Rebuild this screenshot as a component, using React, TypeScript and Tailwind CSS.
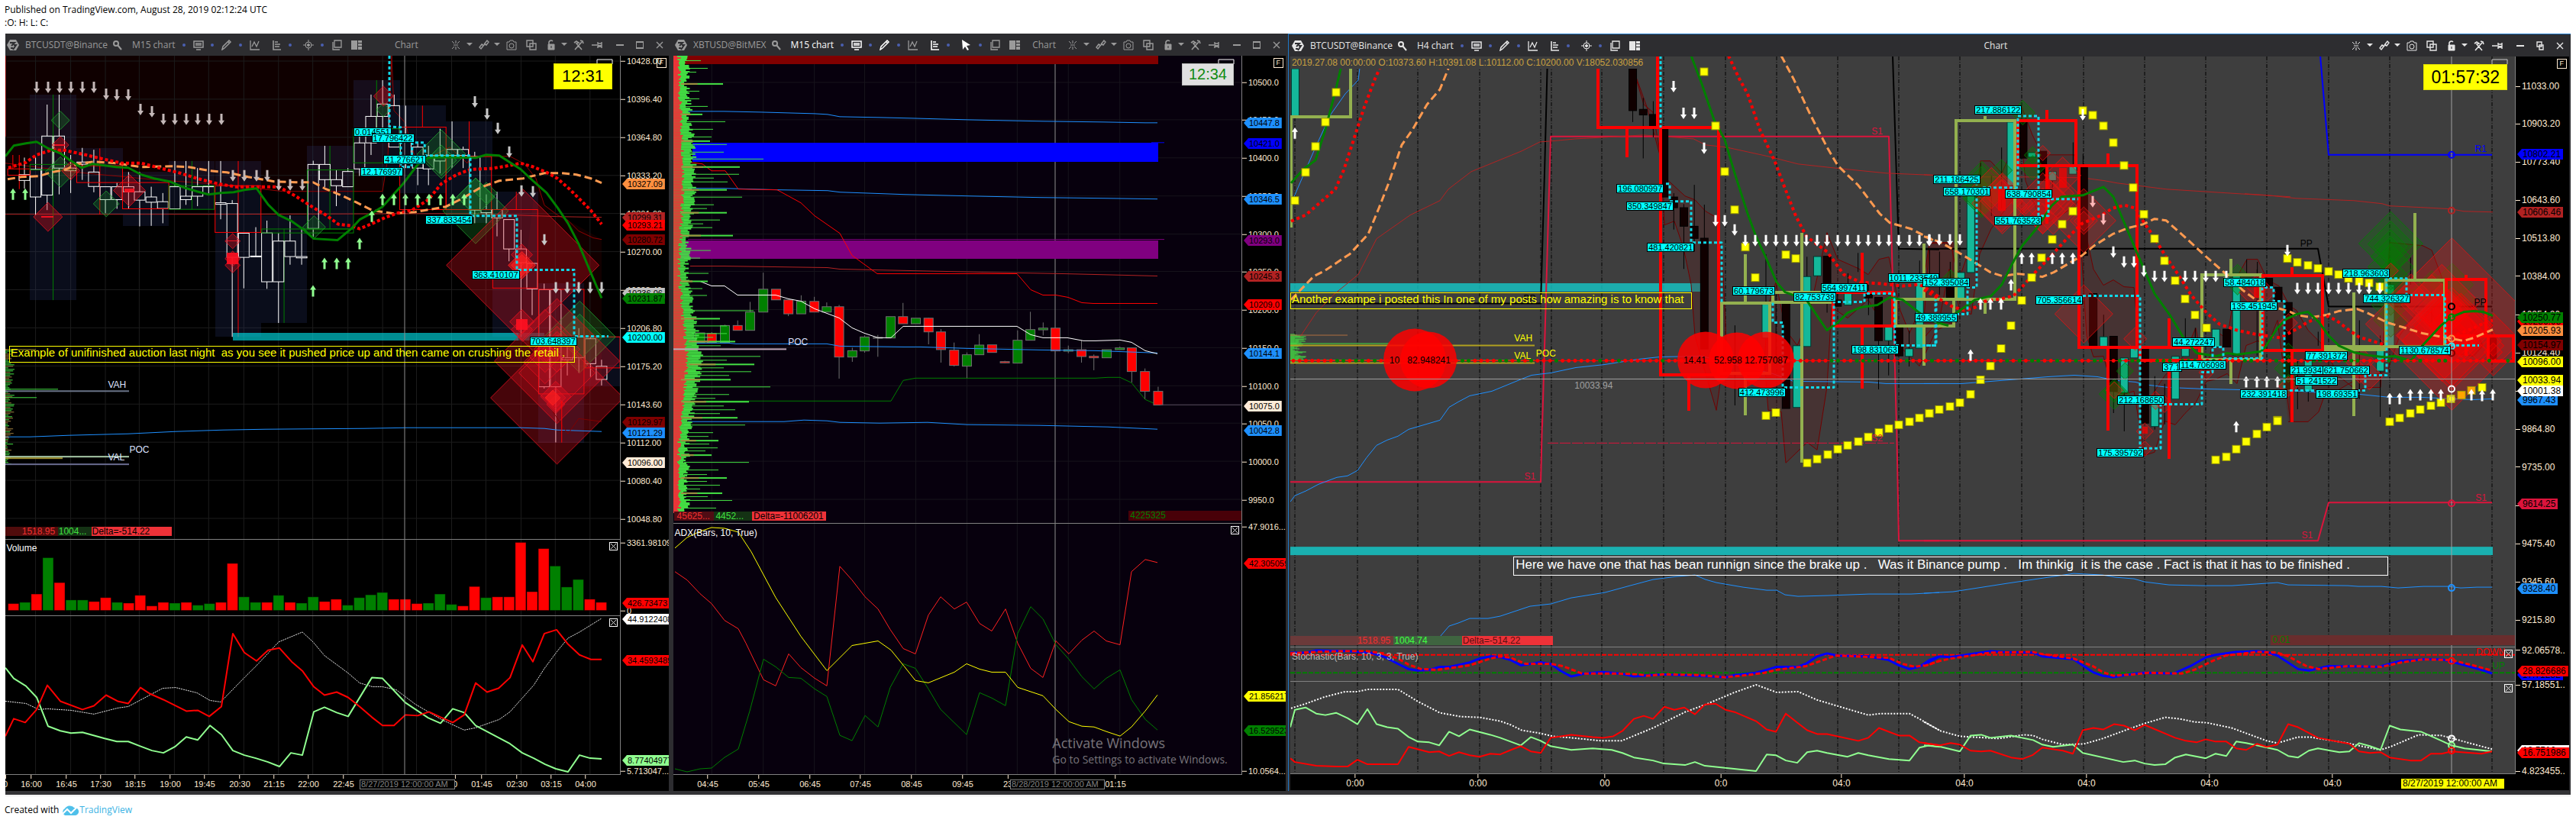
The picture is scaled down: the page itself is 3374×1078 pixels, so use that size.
import React from 'react';
import clsx from 'clsx';

type Zone = [ox: number, oy: number, kx: number, ky: number];
type View = [x: number, y: number, w: number, h: number];
type Mark = { z: Zone; x: number; y: number; t: string; c?: string };
type Tick = { y: number; t: string };
type Flag = { y: number; t: string; c: string };

// Each zone maps its own recording units to workspace pixels.
const A: Zone = [0, 0, 0.5612, 0.3444];
const B: Zone = [0, 540, 0.5612, 0.3431];
const C: Zone = [870, 40, 0.523, 0.3333];
const D: Zone = [870, 550, 0.523, 0.3333];
const E: Zone = [1680, 40, 0.5485, 0.3333];
const F: Zone = [2520, 40, 0.5446, 0.3333];
const G: Zone = [1680, 550, 0.5485, 0.3333];
const H: Zone = [2520, 550, 0.5446, 0.3333];
const J: Zone = [2520, 120, 0.3333, 0.3333];
const K: Zone = [2940, 240, 0.3333, 0.3333];

const px = (z: Zone, x: number, y: number) => [z[0] + x * z[2], z[1] + y * z[3]];
const parse = (s: string) => s.trim().split(/\s+/).map((p) => p.split(',').map(Number));
const points = (z: Zone, s: string) => parse(s).map(([x, y]) => px(z, x, y).map(Math.round).join(',')).join(' ');

const CYAN = 'border border-black bg-[#00ffff] text-black text-[11px] leading-[10px] px-px';

interface LineProps {
  z: Zone;
  p: string;
  c: string;
  w?: number;
  dash?: string;
  fill?: string;
  o?: number;
}

const Line: React.FC<LineProps> = ({ z, p, c, w = 1, dash, fill = 'none', o = 1 }) => (
  <polyline points={points(z, p)} stroke={c} strokeWidth={w} strokeDasharray={dash} fill={fill} opacity={o} strokeLinejoin="round" />
);

// "x1,y1 x2,y2" pairs, one box for every two points
const Boxes: React.FC<LineProps> = ({ z, p, c, w = 1, fill = 'none', o = 1 }) => {
  const list = parse(p);
  return (
    <g stroke={c} strokeWidth={w} fill={fill} opacity={o} shapeRendering="crispEdges">
      {list.filter((_, i) => i % 2 === 0).map(([x, y], i) => {
        const [x1, y1] = px(z, x, y);
        const [x2, y2] = px(z, list[i * 2 + 1][0], list[i * 2 + 1][1]);
        return <rect key={i} x={x1} y={y1} width={x2 - x1} height={y2 - y1} />;
      })}
    </g>
  );
};

// "x,y1,y2" vertical segments
const Wicks: React.FC<LineProps> = ({ z, p, c, w = 1, o = 1 }) => (
  <g stroke={c} strokeWidth={w} opacity={o} shapeRendering="crispEdges">
    {parse(p).map(([x, a, b], i) => {
      const [X, Y] = px(z, x, a);
      return <line key={i} x1={X} x2={X} y1={Y} y2={px(z, x, b)[1]} />;
    })}
  </g>
);

const Squares: React.FC<{ z: Zone; p: string; c?: string }> = ({ z, p, c = '#ffff00' }) => (
  <g fill={c} stroke="#a0a000" strokeWidth={1}>
    {parse(p).map(([x, y], i) => {
      const [X, Y] = px(z, x, y);
      return <rect key={i} x={Math.round(X) - 5} y={Math.round(Y) - 5} width={10} height={10} />;
    })}
  </g>
);

const Arrows: React.FC<{ z: Zone; p: string; c: string; up?: boolean }> = ({ z, p, c, up }) => (
  <g fill={c}>
    {parse(p).map(([x, y], i) => {
      const [X, Y] = px(z, x, y).map(Math.round);
      const s = up ? -1 : 1;
      return (
        <polygon
          key={i}
          points={`${X - 1.5},${Y - 7 * s} ${X + 1.5},${Y - 7 * s} ${X + 1.5},${Y + 2 * s} ${X + 4},${Y + 2 * s} ${X},${Y + 8 * s} ${X - 4},${Y + 2 * s} ${X - 1.5},${Y + 2 * s}`}
        />
      );
    })}
  </g>
);

// "x,y,r" diamonds, radius in pixels
const Gems: React.FC<{ z: Zone; p: string; c: string; o?: number }> = ({ z, p, c, o = 0.3 }) => (
  <g stroke={c} fill={c} fillOpacity={o} strokeOpacity={0.8}>
    {parse(p).map(([x, y, r], i) => {
      const [X, Y] = px(z, x, y);
      return <polygon key={i} points={`${X},${Y - r} ${X + r},${Y} ${X},${Y + r} ${X - r},${Y}`} />;
    })}
  </g>
);

// "x,top,bottom,high,low" candles
const Candles: React.FC<{ z: Zone; p: string; body: string; edge: string; w: number }> = ({ z, p, body, edge, w }) => (
  <g stroke={edge} fill={body} shapeRendering="crispEdges">
    {parse(p).map(([x, t, b, h, l], i) => {
      const [X, T] = px(z, x, t);
      const yb = px(z, x, b)[1];
      return (
        <g key={i}>
          <line x1={X} x2={X} y1={px(z, x, h ?? t)[1]} y2={T} />
          <line x1={X} x2={X} y1={yb} y2={px(z, x, l ?? b)[1]} />
          <rect x={X - w / 2} y={T} width={w} height={Math.max(1, yb - T)} />
        </g>
      );
    })}
  </g>
);

const Rings: React.FC<{ list: [number, number, string][] }> = ({ list }) => (
  <g fill="none" strokeWidth={2}>
    {list.map(([x, y, c], i) => <circle key={i} cx={x} cy={y} r={4} stroke={c} />)}
  </g>
);

const noise = (i: number) => {
  const v = Math.sin(i * 12.9898) * 43758.5453;
  return v - Math.floor(v);
};

interface PaneProps {
  view: View;
  height: string;
  bg: string;
  axis: string;
  ticks?: Tick[];
  flags?: Flag[];
  marks?: Mark[];
  closable?: boolean;
  children: React.ReactNode;
  over?: React.ReactNode;
  axisTop?: React.ReactNode;
}

const Pane: React.FC<PaneProps> = ({ view, height, bg, axis, ticks = [], flags = [], marks = [], closable, children, over, axisTop }) => {
  const top = (y: number) => `${((y - view[1]) / view[3]) * 100}%`;
  return (
    <div className={clsx('flex bg-black', height)}>
      <div className={clsx('relative flex-1 overflow-hidden border-b border-[#808080]', bg)}>
        <svg className="absolute inset-0 h-full w-full" viewBox={view.join(' ')} preserveAspectRatio="none">
          {children}
        </svg>
        {marks.map((m, i) => {
          const [x, y] = px(m.z, m.x, m.y);
          return (
            <span
              key={i}
              className={clsx('absolute whitespace-pre', m.c ?? CYAN)}
              style={{ left: `${((x - view[0]) / view[2]) * 100}%`, top: top(y) }}
            >
              {m.t}
            </span>
          );
        })}
        {closable && (
          <button aria-label="Close pane" className="absolute right-[3px] top-[3px] h-[11px] w-[11px] border border-white">
            <svg viewBox="0 0 9 9" className="h-full w-full"><path d="M1 1l7 7M8 1L1 8" stroke="#ddd" /></svg>
          </button>
        )}
        {over}
      </div>
      <div className={clsx('relative overflow-x-clip border-l border-[#808080]', axis)}>
        {ticks.map((t) => (
          <div key={t.t} className="absolute left-0 flex -translate-y-1/2 items-center whitespace-nowrap text-[#ffebd2]" style={{ top: top(t.y) }}>
            <span className="mr-[2px] h-px w-[6px] bg-[#ffebd2]" />
            {t.t}
          </div>
        ))}
        {flags.map((f) => (
          <div
            key={f.t}
            className={clsx(
              'absolute left-[2px] h-[14px] -translate-y-1/2 whitespace-nowrap pl-[7px] pr-[3px] leading-[14px] text-black [clip-path:polygon(6px_0,100%_0,100%_100%,6px_100%,0_50%)]',
              f.c
            )}
            style={{ top: top(f.y) }}
          >
            {f.t}
          </div>
        ))}
        {axisTop}
      </div>
    </div>
  );
};

interface TimeAxisProps {
  view: [number, number];
  labels: [number, string][];
  stamp: [number, string];
  stampClass: string;
}

const TimeAxis: React.FC<TimeAxisProps> = ({ view, labels, stamp, stampClass }) => {
  const left = (x: number) => `${((x - view[0]) / view[1]) * 100}%`;
  return (
    <div className="relative h-[21px] overflow-hidden bg-black text-[#ffebd2]">
      {labels.map(([x, t]) => (
        <div key={x} className="absolute top-0 flex -translate-x-1/2 flex-col items-center" style={{ left: left(x) }}>
          <span className="h-[5px] w-px bg-[#ffebd2]" />
          <span className="h-[14px] whitespace-nowrap leading-[14px]">{t}</span>
        </div>
      ))}
      <div className={clsx('absolute top-[6px] whitespace-nowrap border px-px leading-[11px]', stampClass)} style={{ left: left(stamp[0]) }}>
        {stamp[1]}
      </div>
    </div>
  );
};

const Icon: React.FC<{ label: string; className?: string; w?: number; children: React.ReactNode }> = ({ label, className, w = 14, children }) => (
  <button aria-label={label} className={clsx('shrink-0', className)}>
    <svg width={w} height={14} viewBox={`0 0 ${w} 14`} fill="none" stroke="currentColor">{children}</svg>
  </button>
);

const Dot: React.FC = () => <span className="ml-[9px] mr-[10px] h-1 w-1 shrink-0 rounded-full bg-[#4a5fb0]" />;

const Caret: React.FC<{ className: string }> = ({ className }) => (
  <Icon label="Menu" w={8} className={className}><path d="M0 4h8l-4 4z" fill="currentColor" stroke="none" /></Icon>
);

interface TitleBarProps {
  symbol: string;
  period: string;
  tone: string;
  periodTone: string;
  cursor?: boolean;
  restored?: boolean;
}

const TitleBar: React.FC<TitleBarProps> = ({ symbol, period, tone, periodTone, cursor, restored }) => (
  <div className={clsx('flex h-[29px] items-center justify-between bg-[#2d2d30] pl-[2px] pr-[7px] font-["Open_Sans",sans-serif] text-[12px]', tone)}>
    <div className="flex items-center">
      <svg width={16} height={16} viewBox="0 0 16 16">
        <path d="M4 1h8l4 7-4 7H4L0 8z" fill="currentColor" />
        <path d="M4 5h6L6 9M9 8h3l-4 6M5 12h3" stroke="#2d2d30" strokeWidth={2} fill="none" />
      </svg>
      <span className="ml-2">{symbol}</span>
      <Icon label="Search" className="ml-[6px]"><circle cx={5} cy={5} r={3} strokeWidth={2} /><path d="M7 7l5 6" strokeWidth={2} /></Icon>
      <button className={clsx('ml-3', periodTone)}>{period}</button>
      <Dot />
      <span className={clsx('flex items-center', periodTone)}>
        <Icon label="Template"><path d="M1 2h12v8H1zM4 13h6M3 5h8M3 7h8" strokeWidth={1.5} /></Icon>
        <Dot />
        <Icon label="Draw"><path d="M1 13l1-4 8-8 2 2-8 8zM9 3l2 2" strokeWidth={1.5} /></Icon>
      </span>
      <Dot />
      <Icon label="Indicators"><path d="M1 1v12h12M3 9l3-6 3 6 3-7" strokeWidth={1.3} /></Icon>
      <Icon label="Levels" w={12} className={clsx('ml-4', periodTone)}><path d="M1 1v12h10M3 3h4M3 6h7M3 9h6" strokeWidth={1.6} /></Icon>
      <Dot />
      <Icon label="Pointer" className="ml-[5px]">
        {cursor ? (
          <path d="M1 0l11 7-5 1 3 5-2 1-3-5-3 4z" fill="#fff" stroke="none" />
        ) : (
          <g><circle cx={7} cy={7} r={4} /><circle cx={7} cy={7} r={1.5} fill="currentColor" /><path d="M7 0v4M7 10v4M0 7h4M10 7h4" /></g>
        )}
      </Icon>
      <Dot />
      <Icon label="Windows"><path d="M4 1h9v9H4zM2 3v10h9" strokeWidth={1.3} /></Icon>
      <Icon label="Layout" className="ml-3"><path d="M0 1h8v12H0zM9 1h5v3H9zM9 5h5v3H9zM9 9h5v4H9z" fill="currentColor" stroke="none" /></Icon>
    </div>
    <span>Chart</span>
    <div className="flex items-center">
      <Icon label="Collapse" w={12}><path d="M1 2l3 3M11 2L8 5M1 12l3-3M11 12L8 9M6 1v4M6 9v4M3 7h6" /></Icon>
      <Caret className="ml-2" />
      <Icon label="Link" className="ml-2"><path d="M6 8l-3 4-2-2 3-4 2 1M7 6l4-5 2 2-3 4-2-1M5 9l4-4" strokeWidth={1.4} /></Icon>
      <Caret className="ml-[6px]" />
      <Icon label="Snapshot" className="ml-2"><path d="M1 3h3l1-2h4l1 2h3v10H1z" /><circle cx={7} cy={8} r={3} /></Icon>
      <Icon label="Duplicate" className="ml-3"><path d="M1 1h8v8H1zM5 5h8v8H5z" strokeWidth={1.4} /></Icon>
      <Icon label="Lock" w={10} className="ml-[14px]"><path d="M1 6h8v7H1z" fill="currentColor" /><path d="M2 6V3a3 3 0 015-1" strokeWidth={1.6} /><path d="M5 8v3" stroke="#2d2d30" /></Icon>
      <Caret className="ml-2" />
      <Icon label="Settings" className="ml-2"><path d="M2 13l9-10M9 1l3 1 1 3M1 4l3-2 3 2-3 1 7 8" strokeWidth={1.6} /></Icon>
      <Icon label="Pin" w={16} className="ml-[10px]"><path d="M0 7h7M8 3v8M8 5h5v4H8M13 3v8" strokeWidth={1.4} /><path d="M8 7h5v2H8z" fill="currentColor" stroke="none" /></Icon>
      <Icon label="Minimize" w={10} className="ml-4"><path d="M0 7h10" strokeWidth={2} /></Icon>
      <Icon label="Maximize" w={10} className="ml-4">
        {restored ? <path d="M1 2h6v6H1zM4 6h5v6H4z" strokeWidth={1.4} /> : <path d="M0 3h10v8H0z" strokeWidth={2} />}
      </Icon>
      <Icon label="Close" w={10} className="ml-4"><path d="M1 3l8 8M9 3l-8 8" strokeWidth={1.4} /></Icon>
    </div>
  </div>
);

const FixedScale: React.FC = () => (
  <span className="absolute right-[3px] top-[3px] border border-[#ffebd2] px-[3px] text-[9px] leading-[11px] text-[#ffebd2]">F</span>
);

const barsVolume = '733r 728g 696r 556g 652r 719g 719g 725r 710r 728g 731r 701r 742r 728r 731g 728r 739g 733g 728r 578r 707g 728g 728r 701g 728r 731g 707g 725r 716r 739g 710g 699g 690g 716r 716r 733r 731g 696g 736g 742r 667r 710g 707r 707r 497r 687r 521r 588g 669g 640g 716r 728r'.split(' ');

const Grid1: React.FC = () => (
  <Wicks z={A} c="#1c1c1c" p={[83, 165, 246, 325, 407, 487, 569, 650, 730, 812, 893, 972, 1054, 1134, 1216, 1296, 1377].map((x) => `${x},0,3200`).join(' ')} />
);

const LeftPanel: React.FC = () => (
  <section className="min-w-0 pr-px text-[11px]">
    <TitleBar symbol="BTCUSDT@Binance" period="M15 chart" tone="text-[#9a9a9a]" periodTone="text-[#9a9a9a]" />
    <Pane
      view={[7, 73, 805, 634]}
      height="h-[634px]"
      bg="bg-black"
      axis="w-[64px]"
      ticks={[
        { y: 80, t: '10428.00' }, { y: 130, t: '10396.40' }, { y: 180, t: '10364.80' }, { y: 230, t: '10333.20' }, { y: 280, t: '10301.60' },
        { y: 330, t: '10270.00' }, { y: 380, t: '10238.40' }, { y: 430, t: '10206.80' }, { y: 480, t: '10175.20' }, { y: 530, t: '10143.60' },
        { y: 580, t: '10112.00' }, { y: 630, t: '10080.40' }, { y: 680, t: '10048.80' },
      ]}
      flags={[
        { y: 241, t: '10327.09', c: 'bg-[#ff9040]' }, { y: 285, t: '10299.31', c: 'bg-[#b22222]' }, { y: 295, t: '10293.21', c: 'bg-[#ff0000]' },
        { y: 314, t: '10280.72', c: 'bg-[#800000]' }, { y: 384, t: '10236.06', c: 'bg-[#c0c0c0]' }, { y: 391, t: '10231.87', c: 'bg-[#008000]' },
        { y: 442, t: '10200.00', c: 'bg-[#00ffff]' }, { y: 553, t: '10129.97', c: 'bg-[#800000]' }, { y: 567, t: '10121.29', c: 'bg-[#1e90ff]' },
        { y: 606, t: '10096.00', c: 'bg-[#ffebd7]' },
      ]}
      marks={[
        { z: A, x: 825, y: 484, t: '0.014551' }, { z: A, x: 867, y: 509, t: '17.796422' }, { z: A, x: 895, y: 591, t: '41.276621' },
        { z: A, x: 841, y: 638, t: '12.176997' }, { z: A, x: 993, y: 821, t: '337.833454' }, { z: A, x: 1102, y: 1030, t: '363.410107' },
        { z: A, x: 1236, y: 1281, t: '703.648397' },
        { z: A, x: 252, y: 1440, t: 'VAH', c: 'text-[12px] text-[#dde0ff]' },
        { z: B, x: 252, y: 147, t: 'VAL', c: 'text-[12px] text-[#dde0ff]' },
        { z: B, x: 302, y: 118, t: 'POC', c: 'text-[12px] text-[#dde0ff]' },
        { z: A, x: 21, y: 1318, t: 'Example of unifinished auction last night  as you see it pushed price up and then came on crushing the retail .', c: 'w-[741px] border border-[#ffff00] text-[15px] leading-[16px] pb-[4px] pl-px text-[#ffff00]' },
        { z: B, x: 12, y: 441, t: '1518.95', c: 'bg-[#500c0c] pl-[22px] w-[69px] text-[12px] leading-[12px] text-[#f03030]' },
        { z: B, x: 135, y: 441, t: '1004...', c: 'bg-[#143214] w-[45px] pl-px text-[12px] leading-[12px] text-[#40e040]' },
        { z: B, x: 213, y: 441, t: 'Delta=-514.22', c: 'bg-[#ee3238] w-[105px] pl-px text-[12px] leading-[12px] text-black' },
      ]}
      over={
        <div className="absolute right-[10px] top-[10px] border border-[#e0e000] bg-[#ffff00] px-[10px] text-[22px] leading-[32px] text-black">12:31</div>
      }
      axisTop={<FixedScale />}
    >
      <Line z={A} c="none" fill="#0f0000" p="12,212 915,212 905,600 893,730 660,730 540,705 180,655 12,620" />
      <Line z={A} c="none" fill="#120000" p="1250,680 1270,780 1325,840 1405,911 1405,1470 1300,1500 1210,1250" />
      <Grid1 />
      <g stroke="#1c1c1c">{[80, 130, 180, 230, 280, 330, 380, 430, 480, 530, 580, 630, 680].map((y) => <line key={y} x1={7} x2={812} y1={y} y2={y} />)}</g>
      <Boxes z={A} c="none" fill="#2a3468" o={0.26} p="70,360 179,1143 179,563 286,817 286,655 394,860 394,613 500,800 502,613 609,1283 609,820 717,1230 717,555 825,872 825,305 933,660 933,402 1041,735 1041,462 1149,850 1149,730 1257,1283 1257,1080 1363,1685 1363,1280 1447,1470" />
      <Line z={A} c="#900000" p="12,620 180,655 350,683 540,705 660,730 893,730 905,600 915,212" />
      <Line z={A} c="#900000" p="915,212 920,420 947,467 960,560 975,620 1000,600 1050,560 1090,620 1100,596 1190,596 1225,625 1250,680 1270,780 1300,820 1325,840 1350,880 1385,905 1405,911" />
      <Line z={A} c="#b22222" p="12,817 500,815 1100,812 1200,818 1300,824 1405,827" />
      <Wicks z={A} c="#008000" p="124,360,1143 448,613,797 663,872,1230 770,555,872 879,305,490" />
      <Wicks z={A} c="#ff0000" p="233,565,817 556,613,1283 986,402,484 1095,462,596 1205,730,798 30,590,643 45,590,720" />
      <Candles
        z={A} w={14} body="none" edge="#fff"
        p="57,665,687,600,718 83,645,750,600,820 110,518,743,398,800 138,518,640,360,740 165,640,650,590,735 192,617,625,563,685 219,655,710,570,732 246,711,760,711,812 273,711,760,695,795 300,711,730,655,795 326,730,762,655,862 353,750,770,711,860 380,768,794,735,850 408,711,795,613,795 434,747,760,613,780 461,711,747,640,785 487,708,711,613,740 515,772,778,613,835 542,775,980,762,1283 569,888,980,888,1098 597,975,978,865,978 623,887,1073,840,1100 650,918,1073,887,1230 677,918,977,820,1008 704,977,982,870,1008 731,626,870,612,902 758,626,684,555,712 785,684,707,647,785 812,653,711,640,711 839,544,643,490,670 866,443,544,360,590 893,396,443,305,500 920,402,560,360,560 947,540,600,402,640 975,560,640,540,705 1000,592,643,555,705 1027,592,613,490,660 1055,569,592,462,640 1081,569,592,558,640 1108,596,800,578,850 1135,798,810,740,850 1160,798,830,730,900 1188,836,948,836,995 1216,948,1000,875,1283 1242,1003,1100,1003,1200 1270,1103,1473,1080,1480 1297,1103,1473,1103,1685 1324,1362,1370,1283,1430 1351,1283,1362,1250,1420 1378,1290,1385,1283,1435 1404,1395,1445,1370,1468"
      />
      <Boxes z={A} c="#ff0000" p="18,643 70,667 179,631 286,695 286,695 394,795 502,707 609,885 933,484 1041,798 1041,596 1147,798 1150,798 1255,1097 1257,1102 1363,1500 1365,1283 1447,1401" />
      <Boxes z={A} c="#008000" p="70,626 179,647 394,707 500,797 611,872 825,887 717,647 825,872 825,490 933,620" />
      <Line z={A} c="#ff0000" p="12,212 12,520" />
      <Boxes z={A} c="none" fill="#00d8e0" o={0.65} p="544,1268 1210,1297" />
      <Boxes z={A} c="none" fill="#2a8a90" o={0.5} p="1210,1268 1270,1297" />
      <Gems z={A} c="#20a030" p="141,458,12 141,655,20 248,776,17 733,865,15 895,418,9 1030,587,32 1030,610,20 1110,803,43 1110,750,25 1135,735,14 1353,1283,47 1353,1283,30" o={0.25} />
      <Gems z={A} c="#e81020" p="141,552,11 165,650,12 112,826,19 302,725,21 543,918,10 543,985,10 543,1010,10 895,366,13 1218,970,14 1218,1225,16 1218,1255,14 1297,1510,20 1297,1515,13 1297,1540,12" o={0.35} />
      <Gems z={A} c="#e81020" p="1220,1010,100 1300,1515,87 1300,1375,82" o={0.3} />
      <Gems z={A} c="#e81020" p="1272,1280,35 1272,1380,28 1300,1420,50 1300,1330,30 1272,1360,20" o={0.16} />
      <Gems z={A} c="#ff2020" p="1218,1010,14 1218,1010,18 1290,1515,10" o={0.6} />
      <Boxes z={A} c="none" fill="#ff1020" o={0.9} p="530,963 556,1005 1205,1215 1231,1255 290,718 313,732 530,915 556,920 97,824 124,829 127,550 152,555" />
      <Line z={A} w={3} c="#ff9a50" dash="10 5" p="18,683 50,675 90,672 120,655 155,645 180,625 220,617 270,620 330,637 400,632 440,636 490,650 530,657 580,675 640,690 690,695 730,695 760,720 800,745 830,770 870,800 920,813 970,808 1040,788 1080,755 1120,715 1165,687 1220,680 1270,660 1310,658 1345,665 1380,680 1405,697" />
      <Line z={A} w={4} c="#ff0000" dash="4 3" p="20,640 60,618 85,590 120,572 150,572 200,590 245,608 285,620 330,622 370,640 420,660 460,680 510,700 550,710 600,710 650,712 690,745 730,790 760,820 790,853 820,860 840,870 870,852 900,828 930,810 960,800 1000,760 1030,700 1065,665 1100,645 1145,643 1180,632 1215,622 1245,635 1275,655 1300,680 1330,720 1355,760 1380,800 1405,855" />
      <Line z={A} w={3} c="#008000" p="12,596 32,555 60,545 85,541 110,563 140,585 165,612 190,638 215,625 245,630 270,635 300,640 330,664 360,680 395,692 430,713 460,730 487,739 515,734 545,733 570,723 598,718 625,779 650,820 680,843 705,870 733,909 787,915 820,870 840,835 870,810 893,788 940,700 975,627 1000,600 1030,597 1110,602 1135,588 1165,592 1190,618 1215,645 1245,690 1275,735 1300,790 1325,850 1350,930 1380,1040 1405,1135" />
      <Line z={A} w={3} c="#10d8e8" dash="4 3" p="908,212 908,482 935,485 935,635 960,637 962,543 990,543 992,592 1097,592 1097,823 1206,823 1206,1028 1340,1028 1340,1281 1420,1281" />
      <Arrows z={A} c="#c4b8b8" p="85,331 112,331 139,331 166,331 193,331 220,331 247,356 273,361 300,361 327,415 355,423 382,452 408,452 435,452 462,452 489,452 516,452 543,669 571,669 598,669 624,669 651,703 678,703 705,703" />
      <Arrows z={A} c="#c8c8c8" p="1109,386 1136,432 1162,487 1189,579 1217,725 1244,730 1271,912 1298,1094 1324,1094 1351,1094 1378,1094 1405,1094" />
      <Arrows z={A} c="#90ff90" up p="31,741 58,741 867,825 731,1110 758,1005 786,1005 813,1005 840,930 893,761 920,761 947,761 974,761 1001,761 1029,761 1056,761 1083,761" />
      <Line z={B} w={1} c="#1e90ff" p="12,97 70,97 160,89 300,84 410,75 520,69 620,66 850,65 950,62 1215,60 1270,65 1300,71 1405,77" />
      <Line z={B} c="#800000" p="1290,0 1325,85 1350,25 1405,37" />
      <Wicks z={B} c="#ff0000" p="1311,-40,118" />
      {Array.from({ length: 76 }, (_, i) => (
        <rect key={i} x={7} y={458 + i * 2} width={2 + noise(i) * 10} height={1} fill={noise(i + 90) > 0.6 ? '#a08040' : '#44e044'} />
      ))}
      <g>
        <rect x={7} y={458} width={40} height={1} fill="#a09030" />
        <rect x={7} y={510} width={69} height={1} fill="#44e044" />
        <rect x={7} y={521} width={41} height={1} fill="#44e044" />
        <rect x={7} y={512} width={162} height={2} fill="#6a7488" />
        <rect x={7} y={598} width={162} height={2} fill="#a8c8a8" />
        <rect x={7} y={600} width={75} height={2} fill="#a09030" />
        <rect x={7} y={608} width={162} height={2} fill="#6a6c90" />
      </g>
      <line x1={530} x2={530} y1={73} y2={707} stroke="#909090" />
      <path d="M782 84v-6h20v6" stroke="#fff" fill="none" />
    </Pane>
    <Pane
      view={[7, 707, 805, 100]}
      height="h-[100px]"
      bg="bg-black"
      axis="w-[64px]"
      closable
      ticks={[{ y: 711, t: '3361.98109' }, { y: 800, t: '0' }]}
      flags={[{ y: 790, t: '426.73473', c: 'bg-[#ff0000]' }]}
      marks={[{ z: B, x: 15, y: 494, t: 'Volume', c: 'text-[12px] text-white' }]}
    >
      <Grid1 />
      {barsVolume.map((s, i) => {
        const [x, y] = px(B, 19 + i * 26.9, parseInt(s, 10));
        return <rect key={i} x={x} y={y} width={14} height={800.5 - y} fill={s.endsWith('r') ? '#ff0000' : '#008000'} stroke="#00000066" />;
      })}
      <line x1={530} x2={530} y1={700} y2={810} stroke="#909090" />
    </Pane>
    <Pane
      view={[7, 807, 805, 208]}
      height="h-[208px]"
      bg="bg-black"
      axis="w-[64px]"
      closable
      ticks={[{ y: 1010, t: '5.713047...' }]}
      flags={[{ y: 811, t: '44.9122408', c: 'bg-white' }, { y: 865, t: '34.4593489', c: 'bg-[#ff0000]' }, { y: 996, t: '8.77404977', c: 'bg-[#90ff90]' }]}
    >
      <Grid1 />
      <Line z={B} c="#e8e8e8" dash="2 1" p="12,1105 60,1112 90,1136 110,1133 165,1141 220,1153 275,1130 300,1124 350,1080 380,1056 410,1053 460,1074 490,1103 515,1109 570,1015 600,965 650,877 705,838 730,877 758,930 812,998 840,1036 870,1048 893,1050 925,1062 970,1115 1030,1174 1083,1214 1110,1206 1165,1174 1190,1145 1245,1042 1270,980 1300,912 1325,862 1352,838 1405,788" />
      <Line z={B} w={2} c="#90ff90" p="12,976 32,1017 60,1045 85,1091 112,1200 140,1217 165,1228 193,1225 245,1248 273,1260 300,1260 326,1278 355,1293 382,1302 408,1279 435,1243 462,1254 490,1199 516,1232 543,1293 570,1312 597,1322 625,1337 652,1356 679,1302 705,1313 732,1144 758,1127 785,1149 813,1162 867,1013 893,1018 920,1065 947,1110 1000,1170 1029,1188 1056,1133 1083,1148 1110,1197 1190,1267 1218,1304 1245,1322 1272,1348 1298,1365 1325,1375 1352,1313 1378,1322 1405,1327" />
      <Line z={B} w={2} c="#ff0000" p="12,1238 32,1171 58,1185 85,1138 111,1042 140,1104 193,1138 220,1123 247,1082 275,1104 300,1112 327,1051 350,1075 382,1098 435,1143 462,1141 489,1164 517,1124 543,844 571,919 598,951 625,910 652,900 680,953 705,988 733,1048 758,1082 786,1069 812,1090 840,1125 867,1167 893,1199 920,1199 947,1156 974,1159 1001,1144 1029,1165 1056,1185 1083,1156 1110,1034 1136,1071 1164,1056 1190,1015 1218,890 1244,954 1271,844 1299,832 1325,887 1352,927 1379,943 1405,945" />
      <line x1={530} x2={530} y1={800} y2={1020} stroke="#909090" />
    </Pane>
    <TimeAxis
      view={[7, 869]}
      labels={[[7, '0'], [41, '16:00'], [87, '16:45'], [132, '17:30'], [177, '18:15'], [223, '19:00'], [268, '19:45'], [314, '20:30'], [359, '21:15'], [404, '22:00'], [450, '22:45'], [596, '0'], [631, '01:45'], [677, '02:30'], [722, '03:15'], [767, '04:00']]}
      stamp={[471, '8/27/2019 12:00:00 AM']}
      stampClass="border-[#808080] bg-black text-[#808080] pr-[8px]"
    />
  </section>
);

const Grid2: React.FC = () => (
  <Wicks z={C} c="#17141c" p={[119, 248, 376, 502, 630, 758, 884, 1012, 1141].map((x) => `${x},0,3200`).join(' ')} />
);

// depth rows that stand out of the profile: price row, width in pixels
const spikes = '118,36 148,45 163,30 207,65 237,34 266,34 296,45 326,38 356,68 386,52 416,50 431,48 446,70 477,66 505,118 535,87 565,86 580,53 595,71 625,70 655,90 685,53 700,44 715,70 745,61 760,39 773,51 803,78 863,49 893,35 954,46 983,45 1013,38 1042,44 1102,105 1132,61 1162,70 1192,70 1207,52 1221,81 1238,62 1281,114 1296,70 1312,106 1327,66 1342,102 1357,73 1370,75 1400,127 1430,73 1445,55 1459,99 1475,66 1491,81 1505,61 1520,84 1550,94 1580,52 1596,46 1610,59 1626,47 1640,58 1654,42 1669,50 1699,99 1729,59 1745,44 1759,70 1774,44 1789,61 1804,35 1819,64 1834,45 1849,77 1879,56';

const MiddlePanel: React.FC = () => (
  <section className="min-w-0 border-l-2 border-[#2d2d30] bg-[#2d2d30] pl-[3px] pr-[3px] text-[11px]">
    <TitleBar symbol="XBTUSD@BitMEX" period="M15 chart" tone="text-[#9a9a9a]" periodTone="text-[#ffffff]" cursor />
    <Pane
      view={[882, 73, 744, 613]}
      height="h-[613px]"
      bg="bg-[#07000d]"
      axis="w-[58px]"
      ticks={[
        { y: 108, t: '10500.0' }, { y: 157, t: '10450.0' }, { y: 207, t: '10400.0' }, { y: 257, t: '10350.0' }, { y: 307, t: '10300.0' }, { y: 356, t: '10250.0' },
        { y: 406, t: '10200.0' }, { y: 456, t: '10150.0' }, { y: 506, t: '10100.0' }, { y: 555, t: '10050.0' }, { y: 605, t: '10000.0' }, { y: 655, t: '9950.0' },
      ]}
      flags={[
        { y: 161, t: '10447.8', c: 'bg-[#1e90ff]' }, { y: 188, t: '10421.0', c: 'bg-[#0000ff]' }, { y: 261, t: '10346.5', c: 'bg-[#1e90ff]' },
        { y: 315, t: '10293.0', c: 'bg-[#800080]' }, { y: 362, t: '10245.3', c: 'bg-[#b22222]' }, { y: 399, t: '10209.0', c: 'bg-[#ff0000]' },
        { y: 463, t: '10144.1', c: 'bg-[#1e90ff]' }, { y: 532, t: '10075.0', c: 'bg-[#ffebd7]' }, { y: 564, t: '10042.8', c: 'bg-[#1e90ff]' },
      ]}
      marks={[
        { z: C, x: 310, y: 1200, t: 'POC', c: 'text-[12px] text-[#dde0ff]' },
        { z: D, x: 24, y: 364, t: '45625...', c: 'bg-[#500c14] w-[53px] pl-[4px] text-[12px] leading-[12px] text-[#f03030]' },
        { z: D, x: 125, y: 364, t: '4452...', c: 'bg-[#143214] w-[50px] pl-[2px] text-[12px] leading-[12px] text-[#40e040]' },
        { z: D, x: 220, y: 364, t: 'Delta=-11006201', c: 'bg-[#ee3238] w-[97px] pl-[2px] text-[12px] leading-[12px] text-black' },
        { z: D, x: 1163, y: 361, t: '4225325', c: 'bg-[#480008] w-[149px] pl-[2px] text-[12px] leading-[13px] text-[#008000]' },
      ]}
      over={
        <div className="absolute right-[10px] top-[10px] border border-[#c0c0c0] bg-[#e0e0e0] px-[8px] text-[20px] leading-[27px] text-[#108a10]">12:34</div>
      }
      axisTop={<FixedScale />}
    >
      <Grid2 />
      <g stroke="#17141c">{[108, 157, 207, 257, 307, 356, 406, 456, 506, 555, 605, 655].map((y) => <line key={y} x1={882} x2={1626} y1={y} y2={y} />)}</g>
      <line x1={1382} x2={1382} y1={73} y2={700} stroke="#909090" />
      <Boxes z={C} c="none" fill="#800000" p="23,100 1238,133" />
      <Boxes z={C} c="none" fill="#0000ff" p="70,442 1238,516" />
      <Boxes z={C} c="none" fill="#800080" p="40,827 1238,897" />
      <Line z={C} c="#0000ff" p="1220,442 1252,442" />
      <Line z={C} c="#800080" w={1} p="60,823 1252,823" />
      <Line z={C} c="#1e90ff" p="60,317 150,317 240,321 376,328 410,331 440,338 540,341 620,346 760,352 850,353 950,358 1100,361 1205,364 1236,362" />
      <Line z={C} c="#1e90ff" p="60,622 150,622 290,628 410,631 440,637 600,646 760,652 940,657 1100,661 1236,664" />
      <Line z={C} c="#b22222" p="65,926 150,928 410,932 440,940 620,946 800,952 1000,957 1160,962 1236,967" />
      <Line z={C} c="#ff0000" p="65,520 95,525 119,553 153,553 185,625 283,626 343,677 376,730 440,798 471,885 534,958 884,958 917,1019 949,1042 980,1042 1012,1051 1045,1070 1075,1075 1236,1075" />
      <Line z={C} c="#008000" p="100,1459 568,1459 598,1376 630,1369 1080,1369 1110,1366 1141,1366 1171,1385 1205,1452 1236,1474" />
      <Candles z={C} w={12} body="#008000" edge="#707070" p="90,1190,1228 152,1161,1228,1158,1232 215,1108,1180,1068,1180 248,1018,1108,953,1108 343,1065,1115,1042,1115 407,1087,1108,1070,1108 471,1260,1285,1248,1304 502,1206,1261,1200,1268 535,1208,1210,1198,1284 567,1126,1210 630,1132,1154 758,1276,1321,1267,1368 789,1238,1276,1195,1276 885,1219,1309,1180,1309 917,1177,1219,1107,1219 949,1171,1178,1149,1200 1012,1256,1262,1240,1270 1108,1256,1288 1141,1249,1256,1244,1256" />
      <Candles z={C} w={12} body="#ff0000" edge="#707070" p="119,1192,1228,1187,1228 184,1161,1180,1141,1180 280,1018,1060 311,1060,1115,1060,1124 376,1066,1108,1048,1108 438,1087,1285,1080,1370 598,1126,1154,1072,1154 662,1132,1186,1130,1235 693,1186,1256,1175,1307 726,1258,1318,1228,1322 821,1237,1267 853,1303,1308,1300,1310 980,1171,1261 1045,1256,1283,1219,1307 1076,1282,1288,1275,1337 1171,1249,1342,1249,1385 1204,1342,1420,1330,1450 1237,1420,1474,1402,1474" />
      <Line z={C} c="#1e90ff" p="60,1231 160,1231 180,1234 408,1234 440,1241 600,1246 640,1244 760,1252 940,1256 1080,1259 1236,1268" />
      <Line z={C} c="#fff" p="45,988 90,988 119,1006 152,1006 184,1042 280,1042 311,1057 343,1066 376,1095 438,1130 471,1171 500,1191 535,1208 568,1208 598,1165 884,1165 917,1196 949,1208 1010,1210 1050,1220 1080,1222 1141,1219 1171,1228 1204,1261 1236,1273" />
      <Line z={D} c="#1e90ff" p="60,8 300,8 350,4 408,5 440,11 540,15 660,13 760,22 940,25 1110,29 1236,40" />
      {Array.from({ length: 300 }, (_, i) => {
        const mid = Math.max(0, 1 - Math.abs(i - 77) / 60) * 10 + Math.max(0, 1 - Math.abs(i - 199) / 55) * 18;
        const y = 73 + i * 2;
        return (
          <g key={i}>
            <rect x={882} y={y} width={13 + mid + noise(i + 500) * 9} height={2} fill="#44e044" />
            <rect x={882} y={y} width={5 + noise(i) * 5 + mid * 0.6} height={2} fill="#ee3238" />
          </g>
        );
      })}
      {parse(spikes).map(([row, w], i) => {
        const y = Math.round(40 + row / 3);
        const base = row > 1180 && row < 1330 ? 24 : 14;
        return (
          <g key={row}>
            <rect x={882 + base} y={y} width={w - base} height={i % 4 === 3 ? 2 : 1} fill="#44e044" />
            {i % 4 === 3 && <rect x={882 + base - 4} y={y} width={w / 3} height={2} fill="#a09040" />}
          </g>
        );
      })}
      <rect x={882} y={457} width={148} height={2} fill="#c0a8b8" />
      <line x1={1520} x2={1626} y1={531} y2={531} stroke="#5a5060" />
      <path d="M1596 84v-6h20v6" stroke="#fff" fill="none" />
    </Pane>
    <Pane
      view={[882, 686, 744, 329]}
      height="h-[329px]"
      bg="bg-[#07000d]"
      axis="w-[58px]"
      closable
      ticks={[{ y: 690, t: '47.9016...' }, { y: 1010, t: '10.0564...' }]}
      flags={[{ y: 738, t: '42.305059', c: 'bg-[#ff0000]' }, { y: 912, t: '21.856217', c: 'bg-[#ffff00]' }, { y: 957, t: '16.529523', c: 'bg-[#008000]' }]}
      marks={[
        { z: D, x: 26, y: 417, t: 'ADX(Bars, 10, True)', c: 'text-[12px] text-white' },
        { z: D, x: 972, y: 1238, t: 'Activate Windows', c: 'font-["Open_Sans",sans-serif] text-[18px] leading-[22px] text-[#77747a]' },
        { z: D, x: 972, y: 1314, t: 'Go to Settings to activate Windows.', c: 'font-["Open_Sans",sans-serif] text-[14px] leading-[16px] text-[#77747a]' },
      ]}
    >
      <Grid2 />
      <line x1={1382} x2={1382} y1={680} y2={1020} stroke="#909090" />
      <Line z={D} c="#ff2020" p="26,598 57,630 90,683 119,724 152,788 185,822 205,880 248,1023 280,1048 311,920 343,974 376,1018 407,1048 439,576 471,631 502,696 535,745 566,825 598,899 630,920 662,768 693,696 727,745 758,718 789,800 821,832 854,743 885,880 917,977 949,1015 980,870 1013,922 1045,866 1076,832 1108,869 1141,884 1171,596 1205,548 1236,562" />
      <Line z={D} c="#008000" p="26,1373 57,1385 90,1373 119,1370 152,1328 185,1295 215,1145 248,941 280,971 311,1015 343,1018 376,1059 407,1090 439,1241 471,1262 502,1165 535,1210 566,1054 598,959 630,977 662,1058 693,1141 758,1238 789,1073 821,1094 854,1124 885,840 917,734 949,784 980,885 1013,941 1045,1012 1076,1060 1108,1018 1141,983 1171,1100 1205,1180 1236,1220" />
      <Line z={D} c="#ffff00" p="26,503 57,463 90,438 119,422 152,425 185,442 218,518 280,700 343,852 407,986 439,935 471,889 502,880 535,869 568,905 600,970 630,1025 662,1034 727,994 758,959 789,980 821,994 854,992 885,1052 949,1087 980,1139 1013,1187 1045,1205 1076,1208 1108,1226 1141,1246 1171,1208 1205,1145 1236,1083" />
    </Pane>
    <TimeAxis
      view={[882, 802]}
      labels={[[927, '04:45'], [994, '05:45'], [1061, '06:45'], [1127, '07:45'], [1194, '08:45'], [1261, '09:45'], [1320, '23'], [1461, '01:15']]}
      stamp={[1323, '8/28/2019 12:00:00 AM']}
      stampClass="border-[#808080] bg-black text-[#808080] pr-[7px]"
    />
  </section>
);

const Grid3: React.FC = () => (
  <g stroke="#000" strokeDasharray="5 2 1 2" strokeWidth={1} shapeRendering="crispEdges">
    {[1696, 1778, 1857, 1938, 2018, 2032, 2098, 2179, 2260, 2327, 2407, 2487, 2567, 2648, 2729, 2809, 2889, 2969, 3050, 3130, 3264].map((x) => (
      <line key={x} x1={x} x2={x} y1={74} y2={1020} />
    ))}
  </g>
);

const SHADE = '#5a1c1c50';

const RightPanel: React.FC = () => (
  <section className="min-w-0 border-l border-t border-[#1e78c8] bg-[#2d2d30] pl-[2px] pr-[2px] text-[12px]">
    <TitleBar symbol="BTCUSDT@Binance" period="H4 chart" tone="text-[#e6e6e6]" periodTone="text-[#e6e6e6]" restored />
    <Pane
      view={[1690, 74, 1604, 774]}
      height="h-[774px]"
      bg="bg-[#3e3e3e]"
      axis="w-[71px]"
      ticks={[
        { y: 113, t: '11033.00' }, { y: 162, t: '10903.20' }, { y: 212, t: '10773.40' }, { y: 262, t: '10643.60' }, { y: 312, t: '10513.80' }, { y: 362, t: '10384.00' },
        { y: 412, t: '10254.20' }, { y: 462, t: '10124.40' }, { y: 512, t: '9994.60' }, { y: 562, t: '9864.80' }, { y: 612, t: '9735.00' }, { y: 662, t: '9605.20' }, { y: 712, t: '9475.40' }, { y: 762, t: '9345.60' }, { y: 812, t: '9215.80' },
      ]}
      flags={[
        { y: 202, t: '10802.21', c: 'bg-[#0000ff]' }, { y: 278, t: '10606.46', c: 'bg-[#b22222]' }, { y: 421, t: '10236.93', c: 'bg-[#ff0000]' }, { y: 416, t: '10250.77', c: 'bg-[#008000]' },
        { y: 433, t: '10205.93', c: 'bg-[#ff9040]' }, { y: 452, t: '10154.97', c: 'bg-[#800000]' }, { y: 474, t: '10096.00', c: 'bg-[#ffff00]' },
        { y: 498, t: '10033.94', c: 'bg-[#ffff00]' }, { y: 524, t: '9967.43', c: 'bg-[#1e90ff]' }, { y: 512, t: '10001.38', c: 'bg-white' },
        { y: 660, t: '9614.25', c: 'bg-[#dc143c]' }, { y: 771, t: '9328.40', c: 'bg-[#1e90ff]' },
      ]}
      marks={[
        { z: E, x: 18, y: 102, t: '2019.27.08 00:00:00 O:10373.60 H:10391.08 L:10112.00 C:10200.00 V:18052.030856', c: 'bg-[#3e3e3e] text-[12px] leading-[16px] pl-[2px] pr-[8px] text-[#c8a040]' },
        { z: E, x: 797, y: 604, t: '196.080997' }, { z: E, x: 820, y: 673, t: '350.349847' }, { z: E, x: 870, y: 836, t: '481.420821' },
        { z: E, x: 1074, y: 1006, t: '60.179673' }, { z: E, x: 1285, y: 994, t: '564.997411' }, { z: E, x: 1220, y: 1030, t: '82.753739' }, { z: E, x: 1445, y: 956, t: '1011.233549' },
        { z: E, x: 1358, y: 1237, t: '198.831063' }, { z: E, x: 1088, y: 1405, t: '412.473996' },
        { z: J, x: -5, y: 733, t: '152.395084' }, { z: J, x: -36, y: 871, t: '49.389955' },
        { z: J, x: 199, y: 55, t: '217.886122' }, { z: J, x: 37, y: 328, t: '211.186425' }, { z: J, x: 76, y: 376, t: '658.170301' }, { z: J, x: 319, y: 385, t: '638.790854' },
        { z: J, x: 277, y: 490, t: '551.763523' }, { z: J, x: 439, y: 802, t: '705.356614' }, { z: J, x: 976, y: 967, t: '44.272247' }, { z: J, x: 937, y: 1066, t: '37.1' }, { z: J, x: 1003, y: 1057, t: '114.706098' },
        { z: J, x: 760, y: 1195, t: '212.168650' }, { z: J, x: 679, y: 1402, t: '175.395792' }, { z: J, x: 1177, y: 733, t: '58.484018' }, { z: J, x: 1204, y: 826, t: '135.451945' }, { z: J, x: 1243, y: 1171, t: '232.391418' },
        { z: K, x: 385, y: 337, t: '218.963603' }, { z: K, x: 466, y: 436, t: '744.326327' }, { z: K, x: 607, y: 640, t: '1130.678574' }, { z: K, x: 238, y: 661, t: '77.391372' },
        { z: K, x: 178, y: 718, t: '21.9934' }, { z: K, x: 305, y: 718, t: '621.750662' }, { z: K, x: 199, y: 760, t: '51.241522' }, { z: K, x: 280, y: 811, t: '198.69351' },
        { z: E, x: 553, y: 1185, t: 'VAH', c: 'text-[#ffff00]' }, { z: E, x: 553, y: 1254, t: 'VAL', c: 'text-[#ffff00]' }, { z: E, x: 605, y: 1245, t: 'POC', c: 'text-[#ffff00]' },
        { z: E, x: 255, y: 1272, t: '10   82.948241', c: 'text-black' }, { z: E, x: 957, y: 1272, t: '14.41', c: 'text-black' }, { z: E, x: 1030, y: 1272, t: '52.958', c: 'text-black' }, { z: E, x: 1103, y: 1272, t: '12.757087', c: 'text-black' },
        { z: E, x: 697, y: 1369, t: '10033.94', c: 'text-[#a0a0a0]' }, { z: E, x: 575, y: 1028, t: 'PP', c: 'text-black' },
        { z: E, x: 1406, y: 370, t: 'S1', c: 'text-[#dc143c]' }, { z: G, x: 577, y: 198, t: 'S1', c: 'text-[#dc143c]' }, { z: G, x: 1406, y: 46, t: 'S2', c: 'text-[#dc143c]' },
        { z: H, x: 908, y: 429, t: 'S1', c: 'text-[#dc143c]' }, { z: H, x: 1326, y: 282, t: 'S1', c: 'text-[#dc143c]' },
        { z: F, x: 1325, y: 438, t: 'R1', c: 'text-[#0000ff]' }, { z: F, x: 905, y: 810, t: 'PP', c: 'text-black' }, { z: F, x: 1323, y: 1041, t: 'PP', c: 'text-black' },
        { z: E, x: 18, y: 1030, t: 'Another exampe i posted this In one of my posts how amazing is to know that', c: 'w-[526px] border border-[#ffff00] text-[15px] leading-[16px] pb-[4px] pl-px text-[#ffff00]' },
        { z: G, x: 551, y: 541, t: 'Here we have one that has bean runnign since the brake up .   Was it Binance pump .   Im thinkig  it is the case . Fact is that it has to be finished .', c: 'w-[1146px] border border-white text-[17px] leading-[20px] pb-[3px] pl-[2px] text-white' },
        { z: G, x: 18, y: 851, t: '1518.95', c: 'bg-[#6b3a3a] pl-[88px] w-[135px] leading-[12px] text-[#f03030]' },
        { z: G, x: 265, y: 851, t: '1004.74', c: 'bg-[#3f6440] w-[90px] pl-px leading-[12px] text-[#40ff40]' },
        { z: G, x: 428, y: 851, t: 'Delta=-514.22', c: 'bg-[#ee3238] w-[119px] pl-px leading-[12px] text-[#5a1010]' },
        { z: H, x: 834, y: 848, t: '0.01', c: 'bg-[#692d2d] w-[320px] pl-[2px] leading-[13px] text-[#008000]' },
      ]}
      over={
        <div className="absolute right-[10px] top-[10px] border border-[#e0e000] bg-[#ffff00] px-[9px] text-[23px] leading-[32px] text-black">01:57:32</div>
      }
      axisTop={<FixedScale />}
    >
      <Grid3 />
      <Boxes z={E} c="none" fill="#14c8c8" o={0.8} p="18,995 1000,1026" />
      <rect x={1690} y={717} width={1575} height={11} fill="#1ab0b0" />
      <Line z={E} c="#700000" fill={SHADE} p="836,150 862,290 885,320 911,575 960,650 985,665 1010,710 1035,735 1050,900 1060,1220 1035,1495 1010,1350 985,1200 975,1000 958,855 935,750 911,765 902,500 870,300 836,150" />
      <Line z={E} c="#700000" fill={SHADE} p="1160,1495 1150,1300 1160,1080 1178,990 1202,1180 1228,1240 1252,1150 1300,795 1325,900 1374,935 1399,960 1423,900 1447,890 1475,1100 1496,1190 1521,1100 1545,835 1600,835 1600,1150 1560,1180 1521,1320 1447,1200 1399,1060 1350,1130 1310,1090 1300,1400 1277,1650 1252,1620 1202,1700 1190,1500 1160,1495" />
      <Line z={J} c="#700000" fill={SHADE} p="0,900 20,597 105,597 125,700 145,720 185,600 222,272 262,272 305,320 345,230 385,60 425,170 465,250 590,250 605,330 625,500 665,700 705,763 745,740 785,768 825,772 868,1245 905,1180 945,1120 1020,1040 1068,930 1105,1120 1147,940 1190,975 1230,730 1270,660 1310,660 1350,740 1395,765 1440,850 1440,1300 1390,900 1350,1000 1310,980 1265,1000 1230,1150 1190,1110 1150,1130 1110,1140 1068,1225 1027,1265 988,1310 945,1295 905,1420 868,1430 825,1180 785,1190 745,1180 705,1040 665,1045 640,960 605,430 585,460 465,525 400,350 385,200 345,430 265,540 220,640 185,875 140,860 100,700 60,900 0,970" />
      <Line z={K} c="#700000" fill={SHADE} p="150,750 160,470 205,500 250,580 310,640 370,760 440,815 490,805 535,805 571,235 700,245 735,265 775,370 811,480 880,525 935,640 900,680 811,668 780,600 735,510 680,500 610,600 560,740 440,770 310,850 290,900 250,940 170,940" />
      <Line z={E} w={2} c="#000" p="632,100 625,560 617,1073 18,1073" />
      <Line z={E} w={2} c="#000" p="1457,100 1472,858 1568,860" />
      <Line z={F} w={2} c="#000" p="0,858 948,858 974,1087 1367,1087" />
      <Line z={G} w={2} c="#dc143c" p="18,247 617,247 620,0" />
      <Line z={E} w={2} c="#dc143c" p="619,1560 640,417 1447,417 1465,1560" />
      <Line z={G} w={2} c="#dc143c" p="1465,0 1472,478 1568,478" />
      <Line z={H} w={2} c="#dc143c" p="0,478 948,478 974,328 1367,328" />
      <Line z={G} c="#dc143c" dash="14 2" p="632,94 1460,94" />
      <Line z={F} w={2} c="#0000ff" p="953,100 974,488 1367,488" />
      <Line z={E} c="#1e90ff" p="20,680 50,570 78,460 115,330 150,250 180,195 187,100" />
      <Line z={G} c="#1e90ff" p="18,325 30,300 55,283 85,255 130,227 155,223 178,200 200,150 225,103 250,80 275,65 300,38 375,2 397,-47 420,-68 447,-94 500,-110 570,-160 595,-175 640,-184 700,-204 770,-216 850,-238 900,-247 1000,-248 1170,-180 1220,-150 1400,-148 1440,-140 1568,-140" />
      <Line z={J} c="#1e90ff" p="0,1150 150,1150 340,1133 490,1122 590,1115 680,1122 760,1138 830,1142 860,1152 960,1163 1100,1170 1240,1173 1440,1176" />
      <Line z={K} c="#1e90ff" p="180,815 300,825 450,832 570,842 700,842 810,850 900,853 975,850" />
      <Line z={G} c="#1e90ff" p="330,865 375,855 397,812 420,800 447,782 490,782 520,775 590,735 640,727 690,703 770,682 830,655 885,630 940,617 985,611 1010,630 1035,641 1100,660 1155,673 1180,671 1200,690 1230,697 1300,694 1400,686 1500,688 1568,681" />
      <Line z={H} c="#1e90ff" p="0,685 70,678 200,646 300,620 360,605 430,611 460,622 505,628 530,640 590,652 670,655 740,653 850,641 875,651 1020,653 1045,658 1100,658 1140,664 1200,658 1260,658 1290,664 1330,661 1367,661" />
      <Line z={E} c="#b22222" p="40,1210 80,1110 120,1040 180,960 225,820 305,725 375,670 395,625 450,555 570,475 615,437 640,435 700,427 770,420 860,410 980,425 1010,450 1060,460 1160,495 1230,525 1330,542 1440,562 1568,570" />
      <Line z={J} c="#b22222" p="0,327 200,335 400,335 620,340 710,350 760,360 950,385 1240,402 1440,415" />
      <Line z={K} c="#b22222" p="0,43 90,47 200,60 430,68 540,80 570,89 700,95 811,103 860,111 975,113" />

      <Wicks z={E} c="#000" p="1080,1160,1475 1154,880,1080 1178,1040,1300 1252,890,1000 1374,875,950 1399,1000,1120 1423,1220,1412 1447,1220,1357 1496,1180,1322 1521,905,990 1350,955,1035 1325,1000,1060" />
      <Wicks z={J} c="#000" p="22,620,760 61,630,800 103,670,760 305,220,460 265,330,490 223,280,480 505,350,410 586,200,300 625,245,300 706,878,965 745,1180,1265 787,1185,1337 907,1120,1330 946,1150,1310 1027,892,1010 1066,930,1010 1309,700,1040" />
      <Wicks z={K} c="#000" p="8,300,360 50,310,370 208,700,890 250,720,860 289,585,640 451,540,850 533,600,920 571,300,400 652,293,400 735,490,550" />
      <Candles z={E} w={10} body="#100000" edge="#000" p="836,150,315,150,360 861,310,332,265,503 885,330,378,278,420 911,385,655 934,655,697,640,783 958,697,770,683,938 983,770,818,607,870 1007,817,1253,685,1253 1202,1065,1487 1300,888,1010,888,1110 1325,1060,1085 1399,1038,1052 1423,1050,1220 1472,1163,1280" />
      <Candles z={J} w={10} body="#100000" edge="#000" p="103,750,810 390,115,262 467,235,350 628,295,645 665,795,1003 745,963,1180 868,1005,1305 1190,935,1005 1355,735,770 1392,770,825 1432,830,1170" />
      <Candles z={K} w={8} body="#300000" edge="#000" p="977,605,695" />
      <Candles z={E} w={10} body="#14b89a" edge="#003830" p="1154,1077,1210 1228,1240,1483 1252,968,1243 1277,889,965 1350,1035,1080 1447,1160,1220 1496,1252,1282 1521,990,1250 30,150,335" />
      <Candles z={J} w={10} body="#14b89a" edge="#003830" p="145,712,815 184,380,712 342,120,370 424,240,258 505,315,350 585,295,325 706,965,1003 787,1048,1185 826,1005,1048 907,1230,1318 988,1042,1210 1027,1010,1042 1147,935,1005 1228,715,1038" />
      <Candles z={K} w={10} body="#14b89a" edge="#003830" p="250,690,820 533,650,740 573,400,640" />

      <Gems z={J} c="#008000" o={0.3} p="388,83,16 227,352,26 227,390,32 227,420,25 305,310,14 427,250,11 427,300,16 105,735,11 790,1100,11 748,1190,20 748,1180,14 1232,740,20 1432,1090,18" />
      <Gems z={J} c="#e81010" o={0.24} p="467,242,10 628,508,42 628,508,18 628,510,13 628,875,38 830,973,15 748,1175,11 868,1337,11 868,1405,10 308,440,40 305,430,28 305,450,34 265,380,27 305,400,25 400,440,14 467,440,40 467,470,30 508,460,34 545,330,24 545,400,20 505,400,28 467,500,20 910,1215,12 945,1230,11 1310,790,24 1310,770,14 1110,1105,10" />
      <Boxes z={J} c="none" fill="#ff0000" o={0.7} p="530,300 560,380 290,385 322,470 1295,745 1320,810 858,1320 880,1345 480,350 495,500" />
      <Gems z={K} c="#008000" o={0.26} p="574,238,42 574,240,30 574,250,22 574,290,26 574,330,30 574,370,25 574,430,30 574,480,25 574,540,22 735,420,25 815,400,28 815,460,30 172,660,10 172,790,12" />
      <Gems z={K} c="#e81010" o={0.3} p="574,345,10 655,460,34 655,440,20 735,480,40 775,470,50 775,500,35 814,555,113 775,600,60 690,600,30 172,550,12 172,800,13 452,700,20 490,760,18 452,745,14 775,560,45" />
      <Gems z={K} c="#ff0000" o={0.24} p="814,620,65 814,560,50 814,660,46 775,520,30 850,560,42 900,560,25 870,610,30 977,635,41 977,640,14 977,665,12" />

      <Boxes z={E} w={4} c="#93b04f" p="1048,1072 1163,1350 1170,1030 1310,1070 -20,-20 162,338" />
      <Wicks z={E} w={4} c="#93b04f" p="1104,880,1072 1104,1350,1515 1239,795,1700 1532,838,1057 1532,1163,1320 20,338,775" />
      <Boxes z={J} w={4} c="#93b04f" p="-112,817 118,922 127,115 358,817 1092,720 1323,1055" />
      <Wicks z={J} w={4} c="#93b04f" p="241,97,115 241,817,873 1207,658,720 1207,1055,1150" />
      <Boxes z={K} w={4} c="#93b04f" p="318,645 548,657 556,382 785,645" />
      <Wicks z={K} w={4} c="#93b04f" p="430,430,645 430,657,917 670,117,382" />
      <Boxes z={E} w={4} c="#ff0000" p="753,40 895,382 902,380 1041,1355 1315,1030 1457,1163" />
      <Wicks z={E} w={4} c="#ff0000" p="823,382,500 970,1355,1495 1384,875,1030 1384,1163,1410" />
      <Boxes z={J} w={4} c="#ff0000" p="370,115 598,293 610,293 838,1008 850,1008 1082,1057" />
      <Wicks z={J} w={4} c="#ff0000" p="484,73,115 484,293,520 724,245,293 724,1008,1335 964,893,1008 964,1057,1445" />
      <Boxes z={K} w={4} c="#ff0000" p="72,365 305,660 793,380 948,600 958,600 1057,700" />
      <Wicks z={K} w={4} c="#ff0000" p="187,330,365 187,660,940 871,362,380 871,600,680" />

      <Line z={E} w={3} c="#ff9a50" dash="10 5" p="20,1060 75,965 100,945 160,880 205,800 230,700 255,590 285,450 310,390 345,290 375,230 395,150" />
      <Line z={E} w={3} c="#ff9a50" dash="10 5" p="1190,100 1220,190 1260,330 1300,460 1325,530 1375,610 1425,720 1450,755 1500,780 1560,830" />
      <Line z={J} w={3} c="#ff9a50" dash="10 5" p="0,570 60,590 120,625 180,660 260,712 310,725 370,718 430,722 465,728 510,712 560,680 620,645 670,605 740,560 800,538 860,522 905,500 950,508 1030,575 1110,650 1180,710 1250,780 1310,825 1380,850 1440,868 1465,880 1520,888 1580,880 1630,865 1700,855 1740,870 1820,910 1880,928 1960,950 2040,965 2120,982 2160,970 2235,937" />
      <Line z={E} w={4} c="#ff0000" dash="4 4" p="20,750 55,725 80,690 125,625 145,550 170,430 195,300 220,190 232,150" />
      <Line z={E} w={4} c="#ff0000" dash="4 4" p="1065,100 1090,190 1110,250 1140,390 1175,510 1200,620 1225,730 1250,810 1300,870 1340,960 1380,990 1430,995 1480,1005 1520,1000 1545,1020 1568,1050" />
      <Line z={J} w={4} c="#ff0000" dash="4 4" p="0,780 50,810 110,845 160,860 200,850 240,825 300,815 350,805 380,775 430,720 500,645 560,580 620,520 700,485 740,460 790,448 830,460 860,510 905,575 950,650 1000,720 1050,800 1110,870 1160,915 1230,938 1300,955 1400,970 1460,935 1510,905 1580,882 1620,900 1670,940 1710,965 1810,995" />
      <Line z={K} w={4} c="#ff0000" dash="4 4" p="811,600 850,590 900,570 950,545 975,540" />
      <Line z={E} w={3} c="#008000" p="20,600 50,545 78,510 100,400 125,240 138,150" />
      <Line z={E} w={3} c="#008000" p="975,100 1000,210 1030,350 1055,430 1080,560 1110,720 1130,810 1155,900 1180,990 1200,1030 1250,1060 1280,1130 1300,1178 1325,1150 1350,1110 1380,1090 1420,1080 1450,1050 1480,1060 1520,1110 1545,1140 1590,1160" />
      <Line z={J} w={3} c="#008000" p="50,915 130,870 200,820 265,805 305,760 345,680 385,610 440,540 500,450 540,413 625,407 705,375 745,415 825,605 905,795 965,880 1020,970 1070,1030 1150,1040 1190,1028 1230,1035 1320,1022" />
      <Line z={K} w={3} c="#008000" p="60,665 80,645 130,570 165,535 205,515 250,508 290,545 330,600 370,640 430,665 490,678 540,683 590,680 655,698 700,640 770,560 811,528 860,508 900,503 940,508 975,522" />
      <Line z={E} w={3} c="#10d8e8" dash="4 3" p="902,100 902,380" />
      <Line z={E} w={3} c="#10d8e8" dash="4 3" p="915,603 925,603 925,673 975,673 975,835 1048,835 1048,1070" />
      <Line z={E} w={3} c="#10d8e8" dash="4 3" p="1170,1070 1170,1150 1194,1150 1194,1405 1316,1405 1316,1067 1390,1067 1390,1035 1460,1035 1463,1240 1560,1240 1560,1060" />
      <Line z={J} w={3} c="#10d8e8" dash="4 3" p="10,1000 46,1000 46,820" />
      <Line z={J} w={3} c="#10d8e8" dash="4 3" p="125,875 170,875 170,770 208,770 208,365" />
      <Line z={J} w={3} c="#10d8e8" dash="4 3" p="230,377 370,377 370,95 450,95 450,490 490,490 490,424 605,424" />
      <Line z={J} w={3} c="#10d8e8" dash="4 3" p="625,805 850,805 850,1405 930,1405 930,1230 1093,1230 1093,1105 1135,1105 1135,1005 1175,1005 1175,1050 1330,1050 1330,770 1375,770 1375,825 1415,825 1415,1175 1570,1175" />
      <Line z={K} w={3} c="#10d8e8" dash="4 3" p="440,815 475,815 475,757 557,757 557,375 637,375 637,440 785,440 790,640 920,640" />

      {Array.from({ length: 38 }, (_, i) => (
        <rect key={i} x={1690} y={438 + i} width={3 + noise(i + 7) * 18} height={1} fill="#44e044" />
      ))}
      <g>
        <rect x={1690} y={439} width={75} height={1} fill="#b07040" />
        <rect x={1690} y={450} width={130} height={1} fill="#44e044" />
        <rect x={1690} y={452} width={320} height={2} fill="#b0a020" />
        <rect x={1690} y={472} width={320} height={1} fill="#b0a020" />
        <rect x={1690} y={475} width={320} height={2} fill="#b0a020" />
      </g>
      <line x1={1690} x2={3294} y1={473} y2={473} stroke="#ff0000" />
      {Array.from({ length: 196 }, (_, i) => (
        <circle key={i} cx={1694 + i * 8.2} cy={473} r={2.5} fill={noise(i + 3) > 0.72 ? '#008000' : '#ff0000'} />
      ))}
      <g fill="#ff0000" fillOpacity={0.85}>
        <circle cx={1853} cy={472} r={41} /><circle cx={1871} cy={472} r={37} />
        <circle cx={2234} cy={472} r={37} /><circle cx={2275} cy={473} r={37} /><circle cx={2313} cy={472} r={37} />
      </g>
      <Squares z={E} p="128,244 103,361 78,457 55,558 30,670 1007,163 1033,375 1056,556 1080,706 1105,853 1129,973 1202,883 1226,898 1154,1516 1178,1503" />
      <Squares z={G} p="1252,172 1277,155 1301,137 1325,118 1350,103 1374,86 1399,70 1423,51 1447,37 1472,22 1496,9 1521,-7 1545,-23" />
      <Squares z={J} p="22,1267 61,1252 103,1240 142,1225 184,1190 223,1135 262,1081 304,1012 343,922 385,821 424,731 463,654 505,583 544,523 586,470 625,76 664,94 706,136 745,202 787,292 823,378 865,484 907,580 946,667 988,745 1027,817 1066,880 1110,931 1147,1450 1189,1438 1228,1408 1267,1378 1309,1348 1348,1321 1390,1294" />
      <Squares z={K} p="130,935 169,298 208,313 250,325 289,337 331,349 370,361 409,375 451,387 490,393 532,408 571,940 610,925 652,907 691,892 733,877 772,863 811,848 934,805" />
      <Squares z={K} c="#ffa500" p="853,833 892,817" />
      <Arrows z={E} c="#fff" p="934,219 958,325 983,325 1007,461 1033,746 1056,746 1080,783 1105,825 1129,825 1154,825 1178,825 1202,825 1227,825 1251,825 1276,825 1300,825 1325,825 1349,825 1374,825 1398,825 1423,825 1447,825 1472,825 1496,825 1521,825 1545,825" />
      <Arrows z={E} c="#fff" up p="30,405" />
      <Arrows z={J} c="#fff" p="22,583 61,583 103,583 142,583 625,90 745,630 787,670 826,670 865,705 907,726 946,726 1027,726 1066,726 1108,726 1147,726 1189,726" />
      <Arrows z={J} c="#ffb8b8" p="664,433 706,502" />
      <Arrows z={J} c="#fff" up p="184,1038 343,763 223,838 262,838 304,838 385,657 424,657 505,657 544,657 586,657 1267,1143 1309,1143 1348,1143 1390,1143 1228,1320" />
      <Arrows z={K} c="#fff" p="169,265 208,413 250,413 289,413 331,413 370,413 409,413 451,413 490,413 532,413" />
      <Arrows z={K} c="#fff" up p="571,850 610,850 652,835 691,835 733,835 772,835 892,835 934,838 975,835" />
      <g stroke="#a0a0a0"><line x1={1690} x2={3294} y1={497} y2={497} /><line x1={3211} x2={3211} y1={74} y2={850} /></g>
      <Rings list={[[3211, 203, '#0000ff'], [3211, 276, '#b22222'], [3211, 402, '#000'], [3211, 416, '#008000'], [3211, 444, '#ff9040'], [3211, 454, '#40e0f0'], [3211, 463, '#800000'], [3211, 510, '#fff'], [3211, 523, '#d0c040'], [3211, 660, '#dc143c'], [3211, 771, '#1e90ff']]} />
      <path d="M3264 84v-6h20v6" stroke="#ccc" fill="none" />
    </Pane>
    <Pane
      view={[1690, 848, 1604, 45]}
      height="h-[45px]"
      bg="bg-[#3e3e3e]"
      axis="w-[71px]"
      closable
      ticks={[{ y: 852, t: '92.06578..' }]}
      flags={[{ y: 884, t: '17.71232', c: 'bg-[#0000ff]' }, { y: 879, t: '28.826686', c: 'bg-[#ff0000]' }]}
      marks={[
        { z: G, x: 22, y: 904, t: 'Stochastic(Bars, 10, 3, 3, True)', c: 'text-[#b8b8b8]' },
        { z: H, x: 1328, y: 895, t: 'DOWN', c: 'leading-[12px] text-[#ff0000]' },
        { z: H, x: 1367, y: 940, t: 'UP', c: 'text-[#008000]' },
      ]}
    >
      <Grid3 />
      <line x1={1690} x2={3294} y1={858} y2={858} stroke="#ff0000" strokeWidth={2} strokeDasharray="6 2" />
      <line x1={1690} x2={3294} y1={882} y2={882} stroke="#008000" strokeWidth={2} strokeDasharray="6 2" />
      <Line z={G} w={3} c="#0000ff" p="18,914 55,914 80,907 155,908 178,913 210,914 245,932 275,960 300,980 323,986 350,985 375,973 400,972 447,955 470,938 495,930 520,932 545,945 568,967 615,955 640,960 665,990 690,1010 720,998 763,994 810,998 838,1010 880,1005 910,1002 985,1008 1060,1014 1080,1004 1130,997 1155,985 1180,971 1230,972 1252,958 1277,930 1300,917 1325,928 1399,931 1447,945 1472,965 1496,980 1521,971 1545,945 1568,930" />
      <Line z={G} w={3} c="#ff0000" dash="6 3" p="18,918 80,912 140,908 200,910 240,918 275,940 300,962 330,980 370,983 447,965 495,940 520,931 545,935 580,960 640,960 670,970 715,1000 800,998 850,1003 870,1007 910,1003 990,1005 1055,1013 1110,1004 1150,995 1180,985 1250,968 1290,945 1320,927 1370,930 1447,935 1480,960 1510,973 1545,962 1568,948" />
      <Line z={H} w={3} c="#0000ff" p="0,962 38,930 65,934 112,922 160,908 190,913 262,915 285,930 360,943 405,992 430,1009 455,1013 505,998 530,995 600,998 640,968 680,932 702,924 750,913 800,908 825,911 851,926 900,981 925,988 974,970 1095,972 1145,947 1200,943 1245,943 1268,950 1340,983 1367,1000" />
      <Line z={H} w={3} c="#ff0000" dash="6 3" p="0,970 38,948 65,938 112,926 160,914 260,913 285,922 360,938 405,970 430,992 455,1008 505,1003 540,995 620,998 650,985 690,950 725,928 800,913 851,914 875,930 920,970 950,982 1020,970 1100,972 1150,955 1200,943 1268,946 1320,965 1367,987" />
      <line x1={3211} x2={3211} y1={848} y2={893} stroke="#a0a0a0" />
      <Rings list={[[3211, 866, '#ff0000']]} />
    </Pane>
    <Pane
      view={[1690, 893, 1604, 121]}
      height="h-[121px]"
      bg="bg-[#3e3e3e]"
      axis="w-[71px]"
      closable
      ticks={[{ y: 897, t: '57.18551..' }, { y: 1010, t: '4.823455..' }]}
      flags={[{ y: 983, t: '18.5516', c: 'bg-white w-[70px]' }, { y: 986, t: '16.751986', c: 'bg-[#ff0000] w-[70px]' }]}
    >
      <Grid3 />
      <Line z={G} w={2} c="#fff" dash="2 2" p="20,1133 55,1115 100,1090 150,1067 178,1069 205,1060 275,1058 323,1108 375,1151 425,1167 470,1169 520,1185 545,1200 570,1220 615,1232 645,1244 690,1250 760,1264 810,1263 885,1213 960,1150 1010,1120 1080,1070 1130,1042 1180,1072 1230,1069 1277,1102 1350,1137 1399,1160 1430,1156 1496,1156 1521,1177 1568,1220" />
      <Line z={H} w={2} c="#fff" dash="2 2" p="0,1188 40,1223 87,1244 180,1254 240,1240 262,1241 285,1257 335,1277 385,1275 430,1255 500,1213 530,1195 580,1171 615,1175 650,1189 680,1192 740,1213 825,1264 851,1273 900,1249 930,1249 950,1254 1020,1272 1060,1287 1098,1298 1125,1285 1190,1240 1245,1242 1367,1295" />
      <Line z={G} w={2} c="#90ff90" p="18,1208 30,1141 55,1130 80,1155 103,1162 128,1151 155,1172 178,1196 202,1136 225,1196 250,1210 275,1216 300,1249 323,1265 350,1268 374,1280 397,1226 422,1244 446,1217 495,1240 520,1250 568,1280 592,1247 617,1262 640,1285 690,1298 740,1293 785,1300 812,1312 838,1328 885,1340 910,1352 960,1360 984,1346 1008,1361 1130,1382 1155,1316 1178,1321 1202,1340 1228,1349 1252,1309 1277,1301 1300,1312 1350,1325 1374,1312 1399,1319 1447,1336 1496,1340 1521,1289 1545,1280 1568,1286" />
      <Line z={H} w={2} c="#90ff90" p="0,1280 40,1288 87,1304 112,1241 137,1238 160,1252 210,1241 262,1260 285,1278 310,1286 358,1277 382,1310 480,1346 507,1340 530,1352 555,1358 580,1355 605,1330 630,1318 678,1331 702,1313 728,1322 751,1265 775,1271 800,1282 851,1300 875,1322 900,1328 925,1301 948,1292 998,1307 1022,1304 1047,1271 1072,1283 1098,1300 1121,1202 1145,1217 1195,1228 1245,1263 1268,1281 1300,1292 1367,1304" />
      <Line z={G} w={2} c="#ff0000" p="18,1332 30,1346 80,1361 128,1366 155,1366 178,1337 202,1355 250,1356 275,1357 300,1286 350,1307 374,1304 397,1322 422,1307 446,1319 470,1325 495,1313 520,1318 545,1298 568,1283 592,1304 617,1312 640,1250 690,1238 740,1249 765,1250 790,1244 812,1225 838,1177 862,1165 885,1177 911,1127 935,1141 959,1130 984,1159 1008,1120 1033,1117 1057,1141 1080,1148 1130,1184 1155,1217 1178,1228 1202,1154 1228,1190 1252,1220 1277,1235 1300,1235 1374,1262 1399,1252 1423,1211 1447,1228 1472,1241 1496,1243 1521,1268 1568,1280" />
      <Line z={H} w={2} c="#ff0000" p="0,1272 38,1280 65,1273 87,1277 112,1301 137,1306 160,1301 210,1328 236,1334 260,1321 285,1289 335,1301 358,1315 382,1222 407,1211 432,1217 457,1196 482,1204 507,1222 530,1199 605,1250 630,1263 655,1268 678,1256 702,1267 728,1267 751,1292 775,1298 800,1274 825,1286 851,1279 875,1198 900,1208 948,1250 1022,1274 1047,1304 1072,1312 1098,1307 1121,1328 1170,1340 1195,1340 1220,1315 1245,1315 1268,1304 1340,1315 1367,1304" />
      <line x1={3211} x2={3211} y1={893} y2={1014} stroke="#a0a0a0" />
      <Rings list={[[3211, 968, '#fff'], [3211, 977, '#90ff90'], [3211, 984, '#ff0000']]} />
    </Pane>
    <TimeAxis
      view={[1690, 1675]}
      labels={[[1775, '0:00'], [1936, '0:00'], [2102, '00'], [2254, '0:0'], [2412, '04:0'], [2573, '04:0'], [2733, '04:0'], [2894, '04:0'], [3055, '04:0']]}
      stamp={[3145, '8/27/2019 12:00:00 AM']}
      stampClass="border-[#ffff00] bg-[#ffff00] text-black pr-[8px]"
    />
  </section>
);

export default function App() {
  return (
    <main className="min-h-screen bg-white font-['Liberation_Sans',Arial,sans-serif]">
      <header className="h-[44px] pl-[6px] pt-[4px] font-['Open_Sans',sans-serif] text-[12px] leading-[17px] text-black">
        <p>Published on TradingView.com, August 28, 2019 02:12:24 UTC</p>
        <p>:O: H: L: C:</p>
      </header>
      <div className="mx-[7px] grid grid-cols-[870fr_810fr_1680fr] border-b-[5px] border-[#333336] bg-[#2d2d30]">
        <LeftPanel />
        <MiddlePanel />
        <RightPanel />
      </div>
      <div className="mx-[7px] mt-px h-px bg-[#e8e8e8]" />
      <footer className="flex h-[36px] items-center gap-[3px] pl-[6px] font-['Open_Sans',sans-serif] text-[12px] text-black">
        <span>Created with</span>
        <a href="#" className="flex items-center text-[12px] text-[#3bb3e4]">
          <svg width={24} height={16} viewBox="0 0 24 16">
            <path d="M5 15a5 5 0 010-9 7 6 0 0112-1 5 5 0 012 10z" fill="#4fc0ea" />
            <path d="M1 14l7-7 5 5 8-8" stroke="#fff" strokeWidth={2} fill="none" />
          </svg>
          TradingView
        </a>
      </footer>
    </main>
  );
}
